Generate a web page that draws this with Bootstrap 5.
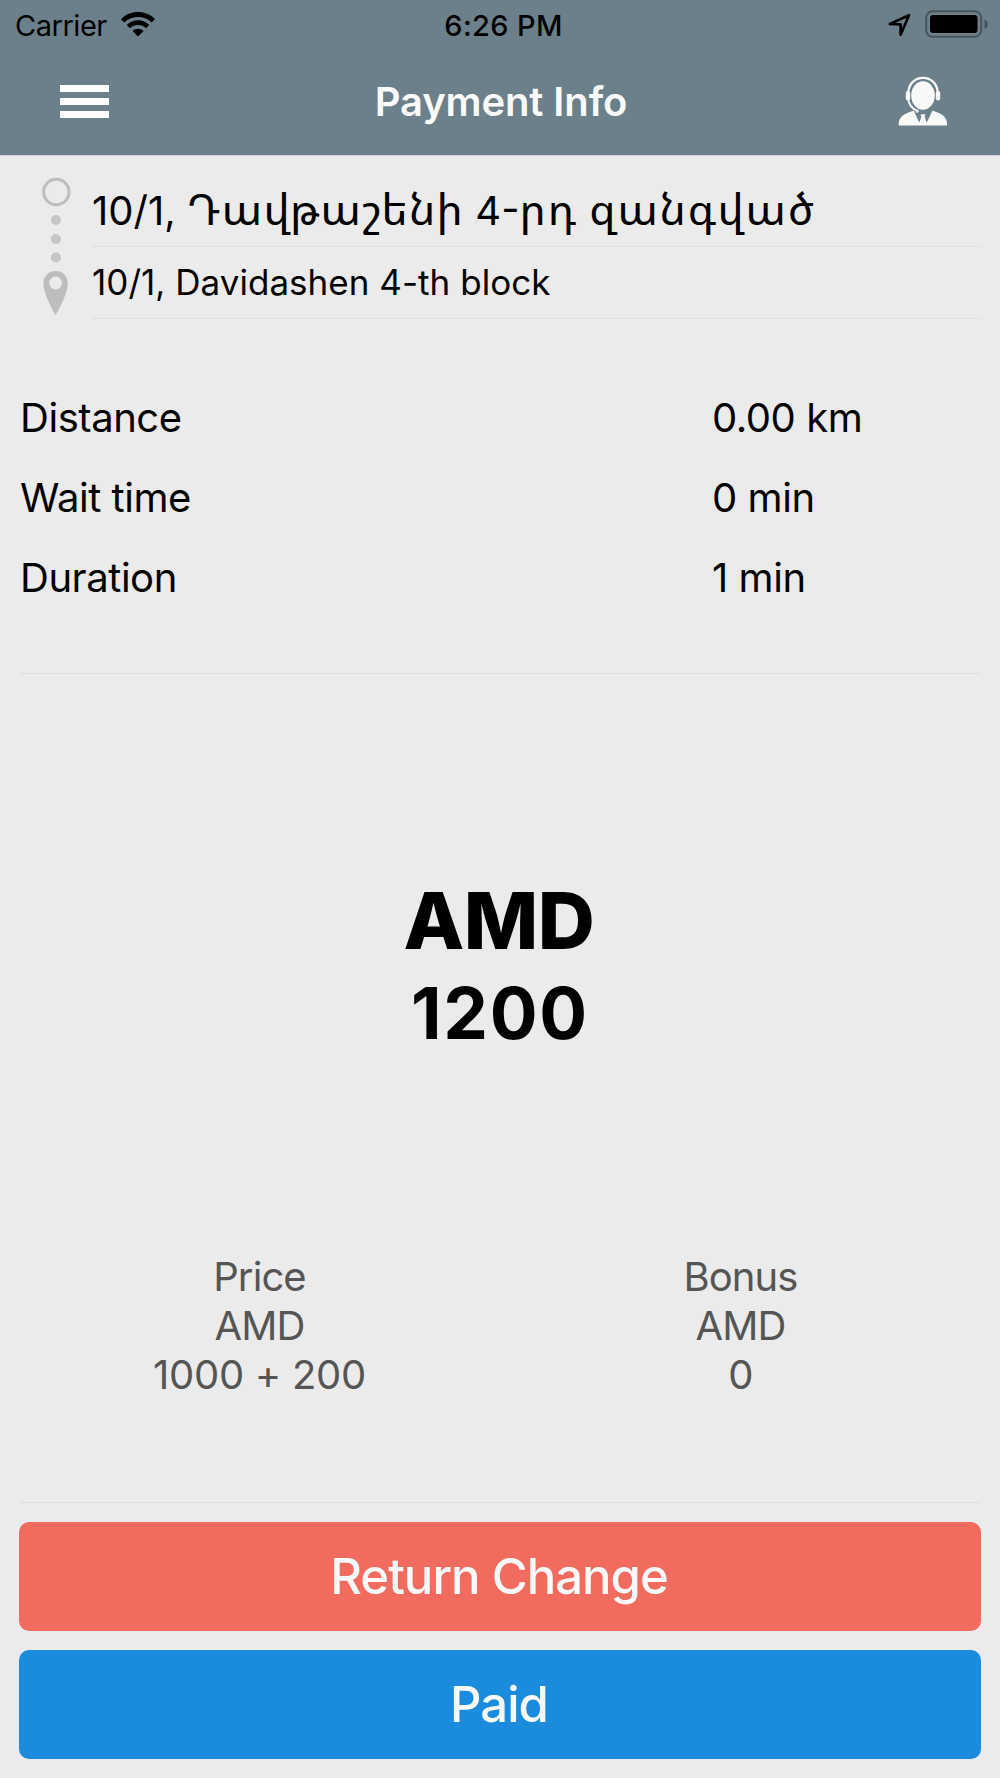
<!DOCTYPE html>
<html lang="en">
<head>
<meta charset="utf-8">
<meta name="viewport" content="width=device-width, initial-scale=1">
<title>Payment Info</title>
<link rel="stylesheet" href="https://cdn.jsdelivr.net/npm/bootstrap@5.3.0/dist/css/bootstrap.min.css">
<style>
body{font-family:Inter,'Noto Sans Armenian',sans-serif;background:#ebebeb;color:#000;font-size:40px}
svg{display:block;flex:none}
.app-head{background:#6b808a;height:156px;border-bottom:1px solid #d4d5dc}
.status{height:51px;font-size:29px;line-height:51px;padding:0 11px 0 15px}
.status>div{flex:1 1 0}
.carrier{letter-spacing:-.47px;gap:14px}
.clock{font-weight:500;letter-spacing:.34px;padding-left:3px}
.topnav{height:101px;padding:0 52px 0 60px;color:#f9fafa}
.burger{width:49px;border:0;background:none;padding:0;display:grid;gap:6px}
.burger i{display:block;height:7px;background:#fff}
.title{font-weight:600;font-size:40px;letter-spacing:-.12px;line-height:1;padding-right:5px}
.screen{padding:0 19px}
.route-mark{padding:20px 0 0 21px;width:73px}
.stop{border-bottom:1px solid #dfdfdf;white-space:pre}
.stop-a{height:91px;padding-top:20px;line-height:70px}
.stop-b{height:72px;line-height:71px;font-size:35px;letter-spacing:.03px}
.hy{font-size:44px;line-height:1}
.w1{letter-spacing:1.2px}.w2{letter-spacing:2px}.w3{letter-spacing:1.7px}
.facts{margin:59px 0 55px}
.fact{height:80px;line-height:80px}
.fact dt{width:693px;font-weight:400;padding-left:1px}
.fact dt,.fact dd{margin:0;letter-spacing:-.45px}
.rule{height:1px;background:#dedede}
.total{margin-top:200px;line-height:93px;font-weight:700}
.cur{font-size:79px;font-weight:800;letter-spacing:-.5px;padding-right:2px}
.sum{font-size:71px;letter-spacing:1.7px}
.parts{margin:192px 0 103px;line-height:49px;color:#555;letter-spacing:-.9px}
.num{letter-spacing:-.29px}
.big-btn{height:108.5px;border:0;border-radius:10px;font-size:49px;font-weight:500;color:#f9f9fa;padding:1px 2px 0 0;letter-spacing:-.95px}
.big-btn:hover{color:#fff}
.btn-change,.btn-change:hover{background:#f16b5f}
.btn-paid,.btn-paid:hover{background:#1b8cdd}
.actions{padding-top:19px;gap:19.5px}
</style>
<script src="https://cdn.jsdelivr.net/npm/bootstrap@5.3.0/dist/js/bootstrap.bundle.min.js"></script>
</head>
<body>
<header class="app-head">
  <div class="status d-flex align-items-center">
    <div class="carrier d-flex align-items-center">Carrier
      <svg width="34" height="27" viewBox="0 0 34 27"><path d="M0 7.200C9-2.300 25-2.300 34 7.200L30.700 10.500C23 3.200 11 3.200 3.300 10.500Z"/><path d="M5.700 13C12 6.700 22 6.700 28.300 13L25 16.300C20.400 12 13.600 12 9 16.300Z"/><path d="M11.500 18.900C14.600 16 19.400 16 22.500 18.900L17 24.400Z"/></svg>
    </div>
    <div class="clock text-center">6:26 PM</div>
    <div class="d-flex justify-content-end align-items-center">
      <svg width="104" height="31" viewBox="0 0 104 31"><path d="M4.800 13 24 4.200 15.600 23.700V13.400Z" transform="translate(0 1)" fill="none" stroke="#000" stroke-width="2.600" stroke-linejoin="round"/><rect x="41.200" y="1.200" width="55" height="25.600" rx="6.500" fill="none" stroke="#47555c" stroke-width="2"/><rect x="45" y="5" width="47.500" height="18" rx="3"/><path d="M99.500 9.500C104 11 104 17.500 99.500 19Z" fill="#47555c"/></svg>
    </div>
  </div>
  <div class="topnav d-flex align-items-center justify-content-between">
    <button class="burger" aria-label="Menu"><i></i><i></i><i></i></button>
    <h1 class="title m-0">Payment Info</h1>
    <svg width="50" height="52" viewBox="0 0 50 52" fill="#f7f9f9">
      <path d="M10.200 18C10.200-3.600 39.800-3.600 39.800 18" fill="none" stroke="#f7f9f9" stroke-width="2.200"/>
      <ellipse cx="25" cy="19.500" rx="11.800" ry="14.300"/>
      <rect x="7.800" y="15" width="4.400" height="9.500" rx="2"/><rect x="37.800" y="15" width="4.400" height="9.500" rx="2"/>
      <path d="M10 23C11 29 14 32.500 19 34.800" fill="none" stroke="#f7f9f9" stroke-width="1.800"/><circle cx="19" cy="35" r="1.700"/>
      <path d="M.600 49.400C.600 40 6 37.800 15.800 34.800L20.500 45 22.800 38.300H27.200L29.500 45 34.300 34.800C44 37.800 49.200 40 49.200 49.400Z"/>
      <path d="M20.300 44.500 22.800 38.500 23.400 40.500 21.300 46.500ZM29.700 44.500 27.200 38.500 26.600 40.500 28.700 46.500Z" fill="#6b808a"/>
    </svg>
  </div>
</header>
<main class="screen">
  <section class="d-flex">
    <div class="route-mark flex-shrink-0">
      <svg width="32" height="142" viewBox="0 0 32 142"><circle cx="16.300" cy="16" r="12.700" fill="none" stroke="#bdbdbd" stroke-width="3"/><g fill="#c6c6c6"><circle cx="15.900" cy="44" r="5.100"/><circle cx="15.900" cy="63" r="5.100"/><circle cx="15.900" cy="81.500" r="5.100"/></g><path fill="#bdbdbd" fill-rule="evenodd" d="M15.600 95C23 95 27.800 100.500 27.800 107.500 27.800 116 20.500 131 15.600 139 10.700 131 3.400 116 3.400 107.500 3.400 100.500 8.200 95 15.600 95ZM15.600 100.600A6.400 6.400 0 1 0 15.600 113.400 6.400 6.400 0 1 0 15.600 100.600Z"/></svg>
    </div>
    <div class="flex-grow-1">
      <div class="stop stop-a">10/1, <span class="hy w1">Դավթաշենի</span> 4-<span class="hy w2">րդ</span> <span class="hy w3">զանգված</span></div>
      <div class="stop stop-b">10/1, Davidashen 4-th block</div>
    </div>
  </section>
  <dl class="facts">
    <div class="fact d-flex"><dt>Distance</dt><dd>0.00 km</dd></div>
    <div class="fact d-flex"><dt>Wait time</dt><dd>0 min</dd></div>
    <div class="fact d-flex"><dt>Duration</dt><dd>1 min</dd></div>
  </dl>
  <div class="rule"></div>
  <section class="total text-center">
    <div class="cur">AMD</div>
    <div class="sum">1200</div>
  </section>
  <section class="parts row g-0 text-center">
    <div class="col-6">Price<br>AMD<br><span class="num">1000 + 200</span></div>
    <div class="col-6">Bonus<br>AMD<br>0</div>
  </section>
  <div class="rule"></div>
  <div class="actions d-grid">
    <button class="btn big-btn btn-change">Return Change</button>
    <button class="btn big-btn btn-paid">Paid</button>
  </div>
</main>
</body>
</html>
